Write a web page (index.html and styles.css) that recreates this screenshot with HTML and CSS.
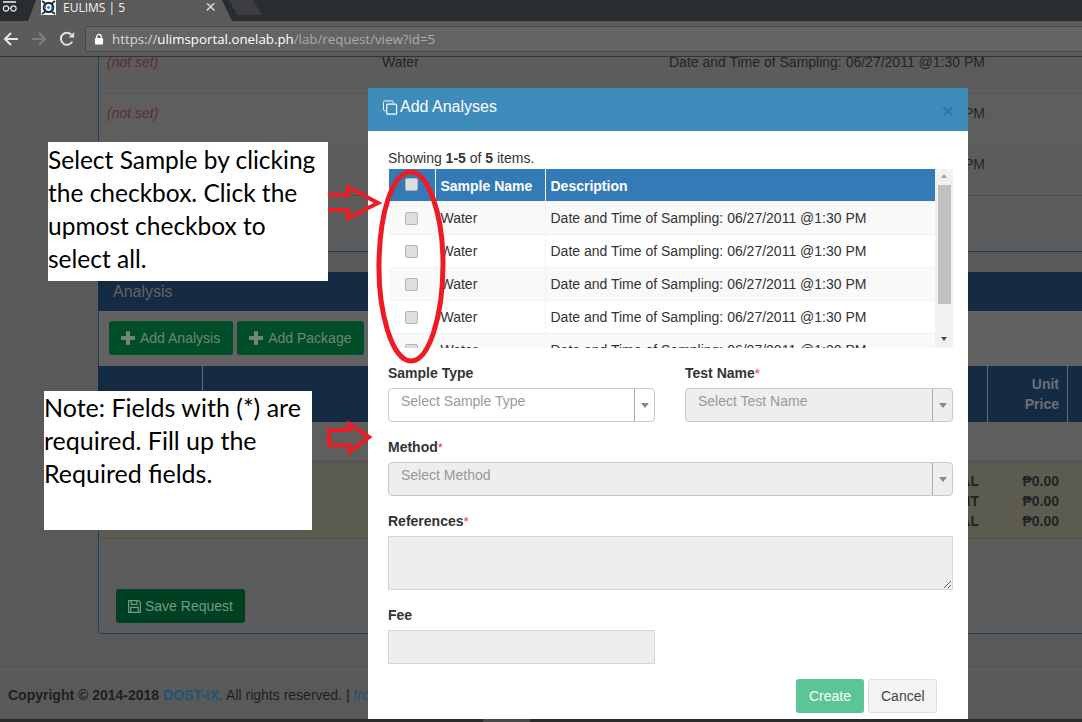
FILE: index.html
```html
<!DOCTYPE html>
<html lang="en">

<head>
    <meta charset="UTF-8">
    <title>EULIMS | 5</title>
    <link rel="stylesheet" href="styles.css">
</head>

<body>
    <!-- browser window -->
    <div class="tabstrip">
        <svg class="incognito" width="18" height="14" viewBox="0 0 18 14">
            <path d="M2 3h13" stroke="#e8e8e8" stroke-width="1.6" />
            <circle cx="5" cy="9.5" r="2.6" fill="none" stroke="#e8e8e8" stroke-width="1.1" />
            <circle cx="12.5" cy="9.5" r="2.6" fill="none" stroke="#e8e8e8" stroke-width="1.1" />
            <path d="M7.6 9.2h2.3" stroke="#e8e8e8" />
        </svg>
        <div class="tab">
            <svg class="favicon" width="15" height="15" viewBox="0 0 15 15">
                <rect width="15" height="15" fill="#fff" />
                <circle cx="7.5" cy="7.5" r="4.6" fill="none" stroke="#1c2f45" stroke-width="2.4" />
                <path d="M1 1l4 3M14 1l-4 3M1 14l4-3M14 14l-4-3" stroke="#1c2f45" stroke-width="1.8" />
                <path d="M3 7h2M10 8h2" stroke="#2b78c8" stroke-width="2" />
                <circle cx="7.5" cy="7.5" r="1.4" fill="#2b78c8" />
            </svg>
            <span class="tab-title">EULIMS | 5</span>
            <span class="tab-close">&#215;</span>
        </div>
        <div class="newtab"></div>
    </div>
    <div class="toolbar">
        <svg class="nav-icon" width="16" height="16" viewBox="0 0 16 16">
            <path d="M15 8H2M8 2L2 8l6 6" fill="none" stroke="#e6e6e6" stroke-width="2" />
        </svg>
        <svg class="nav-icon" width="16" height="16" viewBox="0 0 16 16">
            <path d="M1 8h13M8 2l6 6-6 6" fill="none" stroke="#7d7d7d" stroke-width="2" />
        </svg>
        <svg class="nav-icon" width="16" height="16" viewBox="0 0 16 16">
            <path d="M13.2 10.6A6 6 0 1 1 12.4 3.8" fill="none" stroke="#e0e0e0" stroke-width="2" />
            <path d="M9.6 6.6h5.6V1z" fill="#e0e0e0" />
        </svg>
        <div class="omnibox">
            <svg width="10" height="12" viewBox="0 0 11 13">
                <path d="M3 6V4a2.5 2.5 0 0 1 5 0v2" fill="none" stroke="#fff" stroke-width="1.4" />
                <rect x="1" y="5.500" width="9" height="7" rx="1" fill="#fff" />
            </svg>
            <span class="url"><span class="url-scheme">https://</span>ulimsportal.onelab.ph<span class="url-path">/lab/request/view?id=5</span></span>
        </div>
    </div>

    <!-- dimmed page behind the modal -->
    <div class="page">
        <div class="samples-panel">
            <div class="sample-row"><em>(not set)</em><span>Water</span><span>Date and Time of Sampling: 06/27/2011 @1:30 PM</span></div>
            <div class="sample-row odd"><em>(not set)</em><span>Water</span><span>Date and Time of Sampling: 06/27/2011 @1:30 PM</span></div>
            <div class="sample-row"><em>(not set)</em><span>Water</span><span>Date and Time of Sampling: 06/27/2011 @1:30 PM</span></div>
        </div>
        <div class="analysis-panel">
            <div class="analysis-heading">Analysis</div>
            <div class="analysis-tools">
                <span class="dim-btn">
                    <svg width="14" height="14" viewBox="0 0 14 14"><path d="M7 0v14M0 7h14" stroke="#72877b" stroke-width="4" /></svg>
                    Add Analysis
                </span>
                <span class="dim-btn">
                    <svg width="14" height="14" viewBox="0 0 14 14"><path d="M7 0v14M0 7h14" stroke="#72877b" stroke-width="4" /></svg>
                    Add Package
                </span>
            </div>
            <div class="analysis-head">
                <div></div>
                <div></div>
                <div class="num">Unit<br>Price</div>
                <div></div>
            </div>
            <div class="analysis-empty"></div>
            <div class="analysis-totals">
                <div></div>
                <div class="num">SUBTOTAL<br>DISCOUNT<br>TOTAL</div>
                <div class="num">&#8369;0.00<br>&#8369;0.00<br>&#8369;0.00</div>
                <div></div>
            </div>
            <div class="analysis-foot">
                <span class="dim-btn save">
                    <svg width="13" height="13" viewBox="0 0 14 14">
                        <path d="M.7.7h10.6l2 2v10.600H.7z" fill="none" stroke="#6f9c87" stroke-width="1.3" />
                        <path d="M3.500 1v3.600h6V1M3 13V8h8v5" fill="none" stroke="#6f9c87" stroke-width="1.3" />
                    </svg>
                    Save Request
                </span>
            </div>
        </div>
        <div class="page-footer">
            <b>Copyright &#169; 2014-2018 <span class="footer-link">DOST-IX.</span></b> All rights reserved. | <span class="footer-link plain">frontend</span>
        </div>
    </div>
    <div class="taskbar"><div class="task"></div></div>

    <!-- modal -->
    <div class="modal">
        <div class="modal-header">
            <svg width="16" height="15" viewBox="0 0 16 16">
                <path d="M3.500 11.500h-1a1.500 1.500 0 0 1-1.500-1.500V2.500A1.500 1.500 0 0 1 2.500 1h7.500A1.500 1.500 0 0 1 11.500 2.500v1" fill="none" stroke="#fff" />
                <rect x="4.500" y="4.500" width="10.500" height="10.500" rx="1" fill="none" stroke="#fff" stroke-width="1.300" />
            </svg>
            <span class="modal-title">Add Analyses</span>
            <span class="modal-close">&#215;</span>
        </div>
        <div class="modal-body">
            <div class="summary">Showing <b>1-5</b> of <b>5</b> items.</div>
            <div class="grid-view">
                <div class="grid-clip">
                    <table class="samples">
                        <thead>
                            <tr><th class="check-col"><input type="checkbox"></th><th class="name-col">Sample Name</th><th>Description</th></tr>
                        </thead>
                        <tbody>
                            <tr><td class="check-col"><input type="checkbox"></td><td>Water</td><td>Date and Time of Sampling: 06/27/2011 @1:30 PM</td></tr>
                            <tr><td class="check-col"><input type="checkbox"></td><td>Water</td><td>Date and Time of Sampling: 06/27/2011 @1:30 PM</td></tr>
                            <tr><td class="check-col"><input type="checkbox"></td><td>Water</td><td>Date and Time of Sampling: 06/27/2011 @1:30 PM</td></tr>
                            <tr><td class="check-col"><input type="checkbox"></td><td>Water</td><td>Date and Time of Sampling: 06/27/2011 @1:30 PM</td></tr>
                            <tr><td class="check-col"><input type="checkbox"></td><td>Water</td><td>Date and Time of Sampling: 06/27/2011 @1:30 PM</td></tr>
                        </tbody>
                    </table>
                </div>
                <div class="scrollbar">
                    <span class="arrow-up"></span>
                    <span class="thumb"></span>
                    <span class="arrow-down"></span>
                </div>
            </div>

            <div class="two-cols">
                <div>
                    <label>Sample Type</label>
                    <div class="select"><span>Select Sample Type</span><i></i></div>
                </div>
                <div>
                    <label>Test Name<sup>*</sup></label>
                    <div class="select disabled"><span>Select Test Name</span><i></i></div>
                </div>
            </div>
            <label>Method<sup>*</sup></label>
            <div class="select disabled"><span>Select Method</span><i></i></div>
            <label>References<sup>*</sup></label>
            <textarea class="field area" disabled></textarea>
            <label>Fee</label>
            <input class="field fee" type="text" disabled>
            <div class="modal-actions">
                <button class="btn-create">Create</button>
                <button class="btn-cancel">Cancel</button>
            </div>
        </div>
    </div>

    <!-- annotations pasted over the screenshot -->
    <div class="note note-select">Select Sample by clicking the checkbox. Click the upmost checkbox to select all.</div>
    <div class="note note-required">Note: Fields with (*) are required. Fill up the Required fields.</div>
    <svg class="marks" width="1082" height="722" viewBox="0 0 1082 722">
        <path d="M328 195h20v-8l30 16-30 15v-8h-20" />
        <path d="M329 430h20v-6l20 13-20 15v-7h-20z" />
        <path d="M410 172c-18 2-30 40-31 90-1 50 13 99 32 99 18 0 32-45 32-97 0-50-15-93-33-92z" />
    </svg>
</body>

</html>
```

FILE: styles.css
```css
body,
html {
    margin: 0;
    padding: 0;
    width: 1082px;
    height: 722px;
    overflow: hidden;
}

body {
    position: relative;
    font-family: "Liberation Sans", Arial, sans-serif;
    font-size: 14px;
    line-height: 20px;
    color: #333;
    background: #595959;
}

/* browser */

.tabstrip {
    display: flex;
    height: 21px;
    background: #2a2d30;
    overflow: hidden;
}

.incognito {
    margin: -1px 0 0 1px;
    flex: none;
}

.tab {
    display: flex;
    align-items: flex-start;
    width: 204px;
    height: 21px;
    margin-left: 9px;
    padding-left: 13px;
    box-sizing: border-box;
    flex: none;
    background: #5a5a5a;
    clip-path: polygon(0 100%, 8px 0, 194px 0, 100% 100%);
}

.favicon {
    flex: none;
    margin-top: 0;
}

.tab-title {
    margin-left: 7px;
    font-family: "Open Sans", sans-serif;
    font-size: 12px;
    line-height: 15px;
    color: #f2f2f2;
}

.tab-close {
    margin-left: 80px;
    font-size: 19px;
    line-height: 14px;
    color: #d8d8d8;
}

.newtab {
    width: 33px;
    height: 15px;
    margin-left: -3px;
    background: #3b3d40;
    clip-path: polygon(0 0, 24px 0, 100% 100%, 8px 100%);
}

.toolbar {
    display: flex;
    align-items: center;
    height: 36px;
    box-sizing: border-box;
    padding: 1px 0 0 3px;
    background: #5b5b5b;
    border-bottom: 1px solid #333;
}

.nav-icon {
    flex: none;
    margin-right: 12px;
}

.omnibox {
    display: flex;
    align-items: center;
    gap: 8px;
    height: 26px;
    box-sizing: border-box;
    flex: 1;
    margin: 0 -4px 0 -2px;
    padding-left: 8px;
    background: #646464;
    border: 1px solid #474747;
    border-radius: 2px 0 0 2px;
}

.url {
    font-family: "Open Sans", sans-serif;
    font-size: 13.3px;
    color: #fff;
    white-space: nowrap;
}

.url-scheme {
    color: #d8d8d8;
}

.url-path {
    color: #ababab;
}

/* page behind */

.page {
    height: 662px;
    overflow: hidden;
    background: #595959;
}

.samples-panel {
    width: 1100px;
    height: 209px;
    margin: -14px 0 0 98px;
    box-sizing: border-box;
    background: #5c5c5c;
    border-left: 1px solid #1d3f60;
    border-bottom: 1px solid #1d3f60;
}

.sample-row {
    display: grid;
    grid-template-columns: 275px 287px 1fr;
    height: 51px;
    box-sizing: border-box;
    padding: 9px 8px;
    border-bottom: 1px solid #575757;
    color: #242424;
}

.sample-row.odd {
    background: #5e5e5e;
}

.sample-row:last-child {
    border-bottom-color: #4c4c4c;
}

.sample-row em {
    color: #5a2f2f;
}

.analysis-panel {
    width: 1100px;
    height: 362px;
    margin: 20px 0 0 98px;
    box-sizing: border-box;
    background: #5c5c5c;
    border: 1px solid #1d3f60;
    border-radius: 4px 0 0 4px;
}

.analysis-heading {
    height: 39px;
    margin: -1px 0 0 -1px;
    padding-left: 15px;
    font-size: 16px;
    line-height: 39px;
    color: #5f6368;
    background: #152b43;
}

.analysis-tools {
    display: flex;
    gap: 4px;
    height: 55px;
    box-sizing: border-box;
    padding: 10px;
    background: #626262;
}

.dim-btn {
    display: inline-flex;
    align-items: center;
    gap: 5px;
    height: 34px;
    box-sizing: border-box;
    padding: 0 13px 0 12px;
    color: #6e8577;
    background: #004d2a;
    border-radius: 3px;
}

.analysis-head,
.analysis-totals {
    display: grid;
    grid-template-columns: 105px 785px 80px 1fr;
}

.analysis-head {
    height: 56px;
    margin-left: -1px;
    font-weight: bold;
    color: #6c7074;
    background: #152b43;
}

.analysis-head > div {
    padding: 8px;
    border-right: 1px solid #5f6e7d;
    box-sizing: border-box;
}

.num {
    text-align: right;
}

.analysis-empty {
    height: 41px;
    background: #5e5e5e;
    border-bottom: 3px double #515151;
    box-sizing: border-box;
}

.analysis-totals {
    height: 76px;
    box-sizing: border-box;
    padding-top: 8px;
    font-weight: bold;
    color: #232323;
    background: #5c5b4f;
    border-bottom: 1px solid #525247;
}

.analysis-totals > div {
    padding: 0 10px;
}

.analysis-foot {
    padding: 50px 0 0 17px;
}

.dim-btn.save {
    gap: 4px;
    padding: 0 12px;
    color: #6f9c87;
    background: #004022;
}

.page-footer {
    height: 50px;
    margin-top: 35px;
    padding: 15px 8px;
    color: #1f1f1f;
    border-top: 1px solid #636363;
    white-space: nowrap;
}

.footer-link {
    color: #1d5578;
}

.footer-link.plain {
    font-weight: normal;
}

.taskbar {
    display: flex;
    height: 3px;
    background: #2b2b2b;
}

.task {
    width: 47px;
    margin-left: 483px;
    background: #4a4a4a;
}

/* modal */

.modal {
    position: absolute;
    left: 368px;
    top: 88px;
    width: 600px;
    height: 631px;
    background: #fff;
}

.modal-header {
    display: flex;
    align-items: center;
    gap: 2px;
    height: 44px;
    box-sizing: border-box;
    padding: 0 14px;
    background: #3d8cbb;
    border-bottom: 1px solid #f4f4f4;
}

.modal-title {
    flex: 1;
    margin-top: -6px;
    font-size: 16px;
    color: #fff;
}

.modal-header svg {
    flex: none;
    margin-top: -4px;
}

.modal-close {
    margin-top: 2px;
    margin-right: 0;
    font-size: 21px;
    font-weight: bold;
    color: #3179a5;
}

.modal-body {
    padding: 16px 15px 0 20px;
}

.summary {
    margin-bottom: 1px;
}

.grid-view {
    display: flex;
    height: 179px;
    margin-left: 1px;
    margin-bottom: 15px;
}

.grid-clip {
    width: 546px;
    overflow: hidden;
}

.samples {
    width: 546px;
    table-layout: fixed;
    border-collapse: collapse;
}

.samples th {
    height: 32px;
    box-sizing: border-box;
    padding: 2px 5px 0;
    text-align: left;
    color: #fff;
    background: #337ab7;
    border-left: 1px solid #f4f4f4;
}

.samples td {
    height: 33px;
    box-sizing: border-box;
    padding: 0 5px;
    border: 1px solid #f4f4f4;
    border-width: 1px 0 0 1px;
}

.samples tbody tr:nth-child(odd) {
    background: #f9f9f9;
}

.samples th:first-child,
.samples td:first-child {
    border-left: 0;
}

.check-col {
    width: 46px;
    text-align: center !important;
}

.name-col {
    width: 110px;
}

.samples input {
    appearance: none;
    display: block;
    width: 13px;
    height: 13px;
    margin: 1px auto 0;
    box-sizing: border-box;
    background: #dedede;
    border: 1px solid #b4b4b4;
    border-radius: 2px;
}

.samples th input {
    margin-top: -3px;
}

.scrollbar {
    display: flex;
    flex-direction: column;
    align-items: center;
    width: 18px;
    background: #f1f1f1;
}

.thumb {
    width: 13px;
    height: 119px;
    margin-top: 7px;
    flex: none;
    background: #c1c1c1;
}

.arrow-up,
.arrow-down {
    width: 0;
    height: 0;
    flex: none;
    border: 3.5px solid transparent;
}

.arrow-up {
    margin-top: 5px;
    border-top: 0;
    border-bottom: 4px solid #a3a3a3;
}

.arrow-down {
    margin-top: 33px;
    border-bottom: 0;
    border-top: 4px solid #505050;
}

.two-cols {
    display: grid;
    grid-template-columns: 267px 268px;
    gap: 30px;
}

label {
    display: block;
    margin-bottom: 5px;
    font-weight: bold;
}

sup {
    font-size: 13px;
    font-weight: normal;
    line-height: 0;
    vertical-align: baseline;
    color: #f33;
}

.select {
    position: relative;
    height: 34px;
    margin-bottom: 15px;
    box-sizing: border-box;
    padding: 2px 12px;
    color: #999;
    background: #fff;
    border: 1px solid #c9c9c9;
    border-radius: 4px;
}

.select.disabled {
    background: #eee;
}

.select i {
    position: absolute;
    top: 0;
    right: 0;
    width: 19px;
    height: 32px;
    border-left: 1px solid #aaa;
}

.select i::after {
    content: "";
    position: absolute;
    top: 14px;
    left: 6px;
    border: 4px solid transparent;
    border-bottom: 0;
    border-top: 5px solid #888;
}

.field {
    display: block;
    box-sizing: border-box;
    margin: 0 0 15px;
    padding: 6px 12px;
    background: #eee;
    border: 1px solid #d2d6de;
    border-radius: 0;
}

.area {
    width: 565px;
    height: 54px;
    resize: vertical;
}

.fee {
    width: 267px;
    height: 34px;
}

.modal-actions {
    display: flex;
    justify-content: flex-end;
    gap: 4px;
    padding-right: 16px;
}

.modal-actions button {
    height: 34px;
    padding: 0 12px;
    font: inherit;
    border-radius: 3px;
    border: 1px solid transparent;
}

.btn-create {
    width: 68px;
    color: #fff;
    background: #5cc596;
}

.btn-cancel {
    width: 69px;
    color: #444;
    background: #f4f4f4;
    border-color: #ddd !important;
}

/* annotations */

.note {
    position: absolute;
    box-sizing: border-box;
    font-family: Lato, sans-serif;
    line-height: 33px;
    color: #000;
    background: #fff;
}

.note-select {
    left: 48px;
    top: 142px;
    width: 280px;
    height: 139px;
    padding: 1px 0 0 0;
    font-size: 24.5px;
}

.note-required {
    left: 44px;
    top: 391px;
    width: 268px;
    height: 139px;
    padding: 0;
    font-size: 25px;
}

.marks {
    position: absolute;
    left: 0;
    top: 0;
}

.marks path {
    fill: none;
    stroke: #ed1c24;
    stroke-width: 4;
}

.marks path:last-child {
    stroke-width: 5;
}
```
